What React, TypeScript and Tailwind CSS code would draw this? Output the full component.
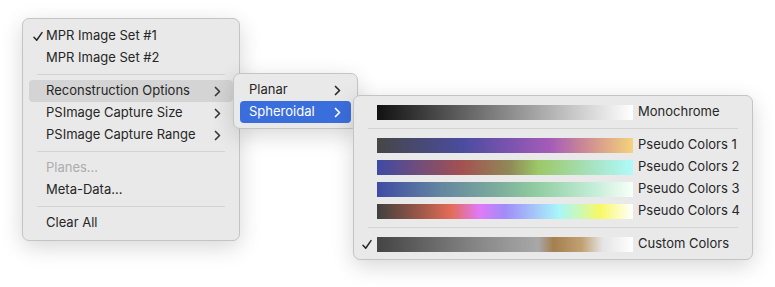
import React from 'react';

const font = { fontFamily: 'Inter, "Liberation Sans", sans-serif' };

function Chevron({ className = '' }: { className?: string }) {
  return (
    <svg className={className} width="7" height="11" viewBox="0 0 7 11" fill="none">
      <path d="M1.5 1.5L5.5 5.5L1.5 9.5" stroke="currentColor" strokeWidth="1.7" strokeLinecap="round" strokeLinejoin="round" />
    </svg>
  );
}

function Check({ className = '' }: { className?: string }) {
  return (
    <svg className={className} width="10" height="11" viewBox="0 0 10 11" fill="none">
      <path d="M1 6.2L3.7 9.2L9 1.6" stroke="currentColor" strokeWidth="1.5" strokeLinecap="round" strokeLinejoin="round" />
    </svg>
  );
}

function Separator() {
  return (
    <div className="h-[11px] flex items-center px-[14px]">
      <div className="h-px w-full bg-[#d3d3d3]" />
    </div>
  );
}

type Item = { label: string; checked?: boolean; sub?: boolean; disabled?: boolean; active?: boolean };

function MenuRow({ item }: { item: Item }) {
  return (
    <div
      className={`h-[22px] mx-[6px] pl-[4px] pr-[12px] flex items-center rounded-[4px] ${
        item.active ? 'bg-[#d4d4d4]' : ''
      } ${item.disabled ? 'text-[#acacac]' : 'text-[#262626]'}`}
    >
      <span className="w-[13px] flex items-center">{item.checked && <Check />}</span>
      <span className="flex-1">{item.label}</span>
      {item.sub && <Chevron className="text-[#3a3a3a]" />}
    </div>
  );
}

const gradients = [
  { label: 'Monochrome', bg: 'bg-[linear-gradient(to_right,#111111,#ffffff)]' },
  null,
  {
    label: 'Pseudo Colors 1',
    bg: 'bg-[linear-gradient(to_right,#464646_0%,#4a4c9e_33%,#7c53b0_52%,#a55db7_68%,#cf8c92_82%,#f5d37a_100%)]',
  },
  {
    label: 'Pseudo Colors 2',
    bg: 'bg-[linear-gradient(to_right,#3f4aa4_0%,#a35151_33%,#908a58_52%,#9cc866_63%,#a6e4c4_85%,#b0fafa_100%)]',
  },
  {
    label: 'Pseudo Colors 3',
    bg: 'bg-[linear-gradient(to_right,#3f4ba4_0%,#6486a0_25%,#7eae9c_48%,#90cca0_62%,#c2ecd6_84%,#f8fff9_100%)]',
  },
  {
    label: 'Pseudo Colors 4',
    bg: 'bg-[linear-gradient(to_right,#404040_0%,#9e5848_17%,#e46c58_29%,#e07af8_40%,#a08cf8_50%,#a8f6fa_71%,#d0f8b0_80%,#f8f864_87%,#ffffff_100%)]',
  },
  null,
  {
    label: 'Custom Colors',
    checked: true,
    bg: 'bg-[linear-gradient(to_right,#444444_0%,#888888_40%,#a8a8a8_63%,#a57f4f_69%,#c1a172_80%,#e4e4e4_88%,#ffffff_100%)]',
  },
];

export default function App() {
  const main: (Item | null)[] = [
    { label: 'MPR Image Set #1', checked: true },
    { label: 'MPR Image Set #2' },
    null,
    { label: 'Reconstruction Options', sub: true, active: true },
    { label: 'PSImage Capture Size', sub: true },
    { label: 'PSImage Capture Range', sub: true },
    null,
    { label: 'Planes...', disabled: true },
    { label: 'Meta-Data...' },
    null,
    { label: 'Clear All' },
  ];

  const panel =
    'absolute bg-[#e9e9e9] rounded-[7px] border border-[#c4c4c4] shadow-[0_6px_22px_rgba(0,0,0,0.16)] text-[13px]';

  return (
    <div className="relative w-[775px] h-[287px] bg-white overflow-hidden" style={font}>
      <div className={`${panel} left-[22px] top-[18px] w-[218px] py-[6px]`}>
        {main.map((it, i) => (it ? <MenuRow key={i} item={it} /> : <Separator key={i} />))}
      </div>

      <div className={`${panel} left-[233px] top-[73px] w-[125px] py-[5px]`}>
        <div className="h-[22px] mx-[6px] pl-[9px] pr-[10px] flex items-center text-[#262626]">
          <span className="flex-1">Planar</span>
          <Chevron className="text-[#2a2a2a]" />
        </div>
        <div className="h-[22px] mx-[6px] pl-[9px] pr-[10px] flex items-center rounded-[4px] bg-[#3b6edd] text-white">
          <span className="flex-1">Spheroidal</span>
          <Chevron />
        </div>
      </div>

      <div className={`${panel} left-[353px] top-[95px] w-[400px] pt-[5px] pb-[4px]`}>
        {gradients.map((g, i) =>
          g ? (
            <div key={i} className="h-[22px] flex items-center text-[#262626]">
              <span className="w-[23px] flex justify-start pl-[8px]">{g.checked && <Check />}</span>
              <div className={`w-[256px] h-[15px] ${g.bg}`} />
              <span className="ml-[5px]">{g.label}</span>
            </div>
          ) : (
            <Separator key={i} />
          ),
        )}
      </div>
    </div>
  );
}
